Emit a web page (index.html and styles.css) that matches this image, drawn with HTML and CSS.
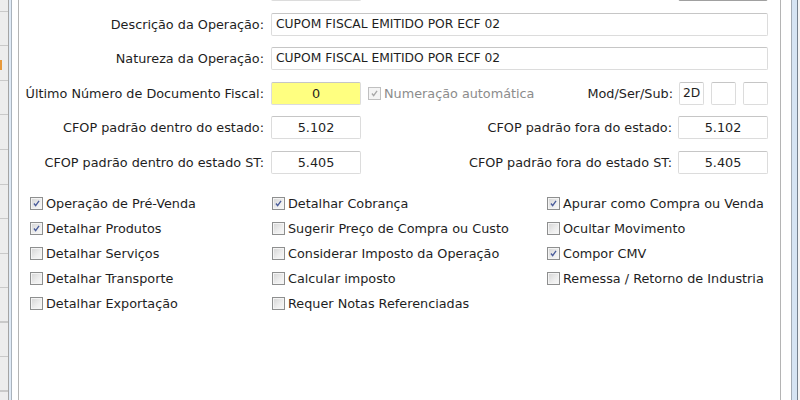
FILE: index.html
```html
<!DOCTYPE html>
<html lang="pt-BR">
<head>
    <meta charset="UTF-8">
    <title>Operação Fiscal</title>
    <link rel="stylesheet" href="styles.css">
</head>
<body>

<div class="window">
    <div class="behind"><span class="behind-mark"></span></div>
    <div class="edge-left"></div>
    <div class="gutter-left"></div>

    <div class="panel">
        <div class="form">
            <!-- row cut off at the top -->
            <div class="row">
                <span class="label"></span>
                <span class="field field-short"></span>
                <span class="right-group">
                    <span class="button-stub"></span>
                </span>
            </div>

            <div class="row">
                <label class="label">Descrição da Operação:</label>
                <span class="field field-wide">CUPOM FISCAL EMITIDO POR ECF 02</span>
            </div>

            <div class="row">
                <label class="label">Natureza da Operação:</label>
                <span class="field field-wide">CUPOM FISCAL EMITIDO POR ECF 02</span>
            </div>

            <div class="row">
                <label class="label">Último Número de Documento Fiscal:</label>
                <span class="field field-short field-yellow">0</span>
                <span class="check check-disabled inline-check">
                    <span class="box checked"><svg viewBox="0 0 13 13"><path d="M3.5 6.5 L5.5 9 L9.5 3.5" /></svg></span>
                    Numeração automática
                </span>
                <span class="right-group">
                    <label class="label-right">Mod/Ser/Sub:</label>
                    <span class="field field-tiny field-left">2D</span>
                    <span class="field field-tiny"></span>
                    <span class="field field-tiny"></span>
                </span>
            </div>

            <div class="row">
                <label class="label">CFOP padrão dentro do estado:</label>
                <span class="field field-short">5.102</span>
                <span class="right-group">
                    <label class="label-right">CFOP padrão fora do estado:</label>
                    <span class="field field-short">5.102</span>
                </span>
            </div>

            <div class="row">
                <label class="label">CFOP padrão dentro do estado ST:</label>
                <span class="field field-short">5.405</span>
                <span class="right-group">
                    <label class="label-right">CFOP padrão fora do estado ST:</label>
                    <span class="field field-short">5.405</span>
                </span>
            </div>
        </div>

        <div class="options" id="options"></div>
    </div>

    <div class="gutter-right"></div>
    <div class="edge-right"></div>
    <div class="outside"></div>
</div>

<script>
    // Options of the operation, column by column
    const options = [
        ['Operação de Pré-Venda', true], ['Detalhar Cobrança', true], ['Apurar como Compra ou Venda', true],
        ['Detalhar Produtos', true], ['Sugerir Preço de Compra ou Custo', false], ['Ocultar Movimento', false],
        ['Detalhar Serviços', false], ['Considerar Imposto da Operação', false], ['Compor CMV', true],
        ['Detalhar Transporte', false], ['Calcular imposto', false], ['Remessa / Retorno de Industria', false],
        ['Detalhar Exportação', false], ['Requer Notas Referenciadas', false], null
    ];

    const container = document.getElementById('options');
    options.forEach(option => {
        const cell = document.createElement('span');
        cell.className = 'check';
        if (option) {
            const [text, checked] = option;
            const mark = checked ? '<svg viewBox="0 0 13 13"><path d="M3.5 6.5 L5.5 9 L9.5 3.5" /></svg>' : '';
            cell.innerHTML = `<span class="box${checked ? ' checked' : ''}">${mark}</span>${text}`;
        }
        container.appendChild(cell);
    });
</script>

</body>
</html>
```

FILE: styles.css
```css
html, body {
    margin: 0;
    padding: 0;
    height: 400px;
    overflow: hidden;
    background-color: #fff;
}

body {
    font-family: "DejaVu Sans", Verdana, sans-serif;
    font-size: 12.8px;
    color: #1e1e1e;
}

.window {
    display: flex;
    height: 400px;
}

/* window lying behind the dialog */
.behind {
    position: relative;
    width: 8px;
    border-right: 1px solid #a4a4a4;
    background-color: #ededed;
    background-image: repeating-linear-gradient(to bottom, transparent 0, transparent 11px, #c9c9c9 11px, #c9c9c9 12px, transparent 12px, transparent 34.5px);
}

.behind-mark {
    position: absolute;
    left: 0;
    top: 60px;
    width: 2px;
    height: 10px;
    background-color: #e89a3c;
}

.edge-left {
    width: 2px;
    background-color: #dfeaf6;
    border-right: 1px solid #aab3bd;
}

.gutter-left {
    width: 6px;
}

.panel {
    flex: none;
    width: 761px;
    border-left: 1px solid #b4b4b4;
    border-right: 1px solid #b4b4b4;
    background-color: #fff;
}

.gutter-right {
    width: 10px;
}

.edge-right {
    width: 5px;
    background-color: #d6e4f3;
    border-left: 1px solid #a3abb4;
    border-right: 1px solid #76818e;
}

.outside {
    width: 2px;
    background-color: #f4f4f4;
}

/* form rows */
.form {
    display: flex;
    flex-direction: column;
    gap: 11.5px;
    margin-top: -22px;
    width: 749px;
}

.row {
    display: flex;
    align-items: center;
    height: 23px;
}

.label {
    width: 245px;
    margin-right: 7px;
    text-align: right;
    flex: none;
}

.label-right {
    margin-right: 6px;
}

.right-group {
    margin-left: auto;
    display: flex;
    align-items: center;
}

.field {
    box-sizing: border-box;
    height: 23px;
    border: 1px solid #dcdcdc;
    border-top-color: #c6c6c6;
    border-radius: 2px;
    background-color: #fff;
    line-height: 21px;
    padding: 0 4px;
    white-space: nowrap;
    overflow: hidden;
}

.field-wide {
    width: 497px;
    font-size: 12.3px;
}

.field-short {
    width: 90px;
    text-align: center;
}

.field-yellow {
    background-color: #ffff80;
}

.field-tiny {
    width: 25px;
    margin-left: 7px;
    padding: 0 3px;
    font-size: 12.3px;
}

.field-tiny.field-left {
    margin-left: 0;
}

.button-stub {
    box-sizing: border-box;
    width: 90px;
    height: 23px;
    border: 1px solid #a0a0a0;
    border-radius: 2px;
    background-color: #e6e6e6;
}

/* checkboxes */
.options {
    display: grid;
    grid-template-columns: 242px 275px auto;
    grid-auto-rows: 25px;
    padding-left: 11px;
    margin-top: 17px;
}

.check {
    display: flex;
    align-items: center;
    white-space: nowrap;
}

.inline-check {
    margin-left: 7px;
}

.check-disabled {
    color: #8c8c8c;
}

.box {
    box-sizing: border-box;
    width: 13px;
    height: 13px;
    margin-right: 3px;
    border: 1px solid #8e8f8f;
    background: linear-gradient(135deg, #d4d4d4 0%, #eeeeee 60%, #f8f8f8 100%);
    box-shadow: inset 0 0 0 1px #f4f4f4;
    flex: none;
}

.box svg {
    display: block;
    width: 11px;
    height: 11px;
}

.box path {
    fill: none;
    stroke: #4a5c9a;
    stroke-width: 1.6;
}

.check-disabled .box {
    border-color: #c0c0c0;
    background: #f4f4f4;
}

.check-disabled .box path {
    stroke: #a8a8a8;
}
```
